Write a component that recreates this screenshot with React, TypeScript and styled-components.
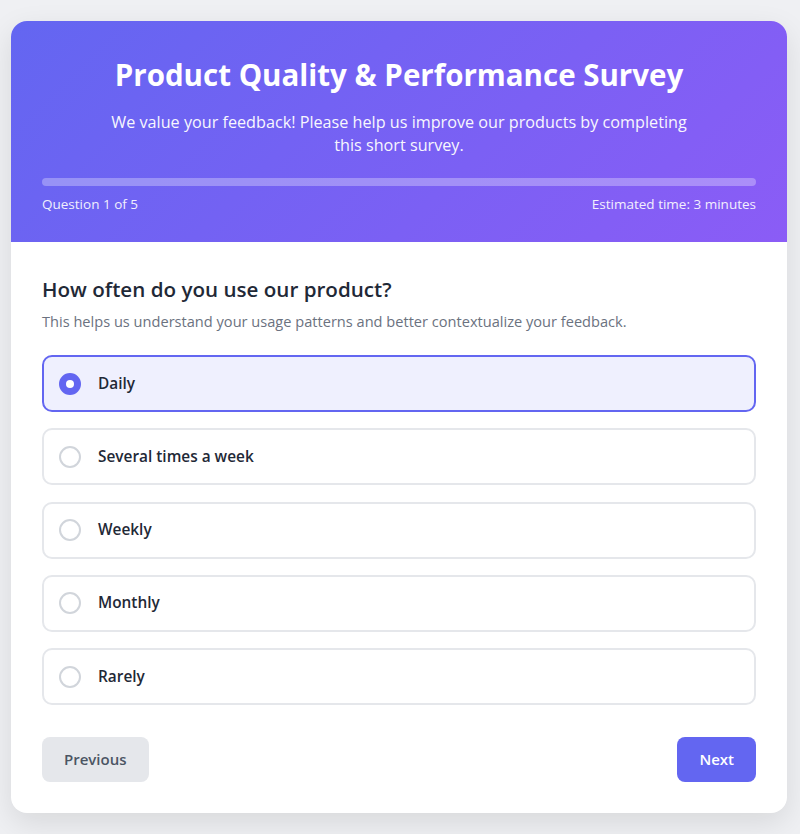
import React, { useState } from 'react';
import styled, { createGlobalStyle } from 'styled-components';

const GlobalStyle = createGlobalStyle`
  * {
    box-sizing: border-box;
  }
  body {
    margin: 0;
    padding: 21px 13px 21px 11px;
    background: #eff0f3;
    font-family: 'Open Sans', 'Noto Sans', sans-serif;
    color: #1f2937;
  }
`;

const StyledCard = styled.div`
  width: 100%;
  background: #ffffff;
  border-radius: 16px;
  overflow: hidden;
  box-shadow: 0 10px 30px rgba(0, 0, 0, 0.1);
`;

const StyledHeader = styled.div`
  background: linear-gradient(135deg, #6366f1 0%, #8b5cf6 100%);
  color: #ffffff;
  padding: 34px 31px 28px;
  text-align: center;
`;

const StyledTitle = styled.h1`
  margin: 0 0 16px;
  font-size: 29.5px;
  line-height: 40px;
  font-weight: 700;
`;

const StyledSubtitle = styled.p`
  margin: 0 auto;
  max-width: 600px;
  font-size: 16.2px;
  line-height: 23px;
  opacity: 0.95;
`;

const StyledProgressTrack = styled.div`
  margin-top: 21px;
  height: 8px;
  border-radius: 4px;
  background: rgba(255, 255, 255, 0.3);
`;

const StyledMeta = styled.div`
  display: flex;
  justify-content: space-between;
  margin-top: 8px;
  font-size: 13.5px;
  line-height: 20px;
  opacity: 0.9;
`;

const StyledBody = styled.div`
  padding: 33px 31px 31px;
`;

const StyledQuestion = styled.h2`
  margin: 0 0 7px;
  font-size: 20.6px;
  line-height: 28px;
  font-weight: 600;
  color: #1f2937;
`;

const StyledHint = styled.p`
  margin: 0 0 23px;
  font-size: 14.6px;
  line-height: 22px;
  color: #6b7280;
`;

const StyledOptions = styled.div`
  display: flex;
  flex-direction: column;
  gap: 16.3px;
`;

const StyledOption = styled.label<{ selected: boolean }>`
  display: flex;
  align-items: center;
  gap: 17px;
  padding: 15.5px 15px;
  border: 2px solid ${({ selected }) => (selected ? '#6366f1' : '#e5e7eb')};
  border-radius: 10px;
  background: ${({ selected }) => (selected ? '#eff0fe' : '#ffffff')};
  cursor: pointer;
`;

const StyledRadio = styled.span<{ selected: boolean }>`
  display: flex;
  align-items: center;
  justify-content: center;
  width: 22px;
  height: 22px;
  border-radius: 50%;
  border: 2px solid ${({ selected }) => (selected ? '#6366f1' : '#d1d5db')};
  background: ${({ selected }) => (selected ? '#6366f1' : '#ffffff')};

  &::after {
    content: '';
    width: 8px;
    height: 8px;
    border-radius: 50%;
    background: #ffffff;
    display: ${({ selected }) => (selected ? 'block' : 'none')};
  }
`;

const StyledOptionLabel = styled.span`
  font-size: 15.4px;
  line-height: 22px;
  font-weight: 600;
  color: #1f2937;
`;

const StyledFooter = styled.div`
  display: flex;
  justify-content: space-between;
  margin-top: 32px;
`;

const StyledButton = styled.button<{ primary?: boolean }>`
  border: none;
  border-radius: 8px;
  padding: 11px 22px;
  font-family: inherit;
  font-size: 15px;
  line-height: 23px;
  font-weight: 600;
  color: ${({ primary }) => (primary ? '#ffffff' : '#4b5563')};
  background: ${({ primary }) => (primary ? '#6366f1' : '#e5e7eb')};
  cursor: pointer;
`;

const OPTIONS = ['Daily', 'Several times a week', 'Weekly', 'Monthly', 'Rarely'];

const App = () => {
  const [selected, setSelected] = useState(0);
  const step = 1;
  const total = 5;

  return (
    <>
      <GlobalStyle />
      <StyledCard>
        <StyledHeader>
          <StyledTitle>Product Quality &amp; Performance Survey</StyledTitle>
          <StyledSubtitle>
            We value your feedback! Please help us improve our products by completing this short survey.
          </StyledSubtitle>
          <StyledProgressTrack />
          <StyledMeta>
            <span>
              Question {step} of {total}
            </span>
            <span>Estimated time: 3 minutes</span>
          </StyledMeta>
        </StyledHeader>
        <StyledBody>
          <StyledQuestion>How often do you use our product?</StyledQuestion>
          <StyledHint>
            This helps us understand your usage patterns and better contextualize your feedback.
          </StyledHint>
          <StyledOptions>
            {OPTIONS.map((option, i) => (
              <StyledOption key={option} selected={i === selected} onClick={() => setSelected(i)}>
                <StyledRadio selected={i === selected} />
                <StyledOptionLabel>{option}</StyledOptionLabel>
              </StyledOption>
            ))}
          </StyledOptions>
          <StyledFooter>
            <StyledButton>Previous</StyledButton>
            <StyledButton primary>Next</StyledButton>
          </StyledFooter>
        </StyledBody>
      </StyledCard>
    </>
  );
};

export default App;
